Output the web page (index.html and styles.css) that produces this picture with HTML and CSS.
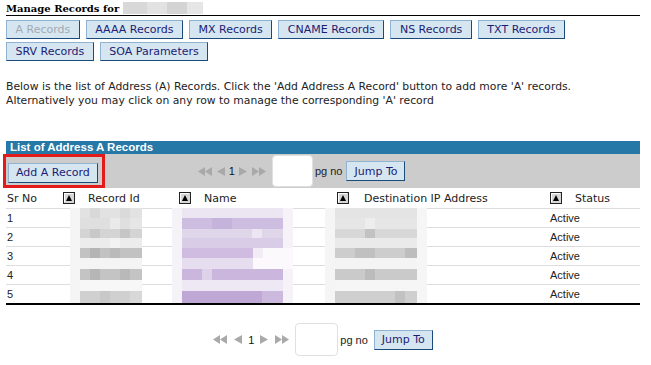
FILE: index.html
```html
<!DOCTYPE html>
<html lang="en">
<head>
  <meta charset="UTF-8" />
  <meta name="viewport" content="width=device-width, initial-scale=1.0" />
  <title>Manage Records</title>
  <link rel="stylesheet" href="styles.css">
</head>
<body>
<div class="page">
  <h2 class="page-title">Manage Records for <span class="masked-domain"></span></h2>

  <div class="tabs">
    <button class="btn" disabled>A Records</button>
    <button class="btn">AAAA Records</button>
    <button class="btn">MX Records</button>
    <button class="btn">CNAME Records</button>
    <button class="btn">NS Records</button>
    <button class="btn">TXT Records</button>
    <button class="btn">SRV Records</button>
    <button class="btn">SOA Parameters</button>
  </div>

  <p class="intro">Below is the list of Address (A) Records. Click the 'Add Address A Record' button to add more 'A' records.<br>
  Alternatively you may click on any row to manage the corresponding 'A' record</p>

  <div class="section-bar">List of Address A Records</div>
  <div class="toolbar">
    <span class="highlight"><button class="btn btn-add">Add A Record</button></span>
    <div class="pager pager-top">
      <div class="pager-nav">
        <svg width="14" height="9" viewBox="0 0 14 9"><polygon points="7,0 0,4.5 7,9" /><polygon points="14,0 7,4.5 14,9" /></svg>
        <svg width="9" height="9" viewBox="0 0 9 9"><polygon points="9,0 1,4.5 9,9" /></svg>
        <span class="page-num">1</span>
        <svg width="9" height="9" viewBox="0 0 9 9"><polygon points="0,0 8,4.5 0,9" /></svg>
        <svg width="14" height="9" viewBox="0 0 14 9"><polygon points="0,0 7,4.5 0,9" /><polygon points="7,0 14,4.5 7,9" /></svg>
      </div>
      <input class="page-input" type="text" />
      <span class="pg-label">pg no</span>
      <button class="btn btn-jump">Jump To</button>
    </div>
  </div>

  <div class="records">
    <table>
      <colgroup>
        <col class="col-sr" />
        <col class="col-id" />
        <col class="col-name" />
        <col class="col-ip" />
        <col class="col-status" />
      </colgroup>
      <thead>
        <tr>
          <th>Sr No</th>
          <th><span class="sort"><svg width="12" height="12" viewBox="0 0 12 12"><rect x="0.5" y="0.5" width="11" height="11" fill="#d6d6d6" stroke="#222" /><polyline points="1.5,10 1.5,1.5 10,1.5" fill="none" stroke="#fff" /><polygon points="3,9 9,9 6,3" fill="#000" /></svg></span>Record Id</th>
          <th><span class="sort"><svg width="12" height="12" viewBox="0 0 12 12"><rect x="0.5" y="0.5" width="11" height="11" fill="#d6d6d6" stroke="#222" /><polyline points="1.5,10 1.5,1.5 10,1.5" fill="none" stroke="#fff" /><polygon points="3,9 9,9 6,3" fill="#000" /></svg></span>Name</th>
          <th><span class="sort sort-wide"><svg width="12" height="12" viewBox="0 0 12 12"><rect x="0.5" y="0.5" width="11" height="11" fill="#d6d6d6" stroke="#222" /><polyline points="1.5,10 1.5,1.5 10,1.5" fill="none" stroke="#fff" /><polygon points="3,9 9,9 6,3" fill="#000" /></svg></span>Destination IP Address</th>
          <th><span class="sort"><svg width="12" height="12" viewBox="0 0 12 12"><rect x="0.5" y="0.5" width="11" height="11" fill="#d6d6d6" stroke="#222" /><polyline points="1.5,10 1.5,1.5 10,1.5" fill="none" stroke="#fff" /><polygon points="3,9 9,9 6,3" fill="#000" /></svg></span>Status</th>
        </tr>
      </thead>
      <tbody>
        <tr><td class="sr">1</td><td></td><td></td><td></td><td>Active</td></tr>
        <tr><td class="sr">2</td><td></td><td></td><td></td><td>Active</td></tr>
        <tr><td class="sr">3</td><td></td><td></td><td></td><td>Active</td></tr>
        <tr><td class="sr">4</td><td></td><td></td><td></td><td>Active</td></tr>
        <tr><td class="sr">5</td><td></td><td></td><td></td><td>Active</td></tr>
      </tbody>
    </table>

    <!-- pixelated redaction over the id, name and ip columns -->
    <svg class="mosaic" width="357" height="95" viewBox="0 0 357 95" shape-rendering="crispEdges">
      <g>
        <rect x="0" y="0" width="10" height="95" fill="#f5f5f5" />
        <rect x="10" y="0" width="62" height="10" fill="#e2e2e2" />
        <rect x="20" y="0" width="10" height="10" fill="#d8d8d8" />
        <rect x="50" y="0" width="10" height="10" fill="#dadada" />
        <rect x="10" y="10" width="62" height="11" fill="#dfdfdf" />
        <rect x="40" y="10" width="10" height="11" fill="#eaeaea" />
        <rect x="60" y="10" width="12" height="11" fill="#e6e6e6" />
        <rect x="10" y="21" width="62" height="9" fill="#d4d4d4" />
        <rect x="20" y="21" width="10" height="9" fill="#c8c8c8" />
        <rect x="50" y="21" width="10" height="9" fill="#c6c6c6" />
        <rect x="10" y="30" width="62" height="10" fill="#ececec" />
        <rect x="40" y="30" width="10" height="10" fill="#f2f2f2" />
        <rect x="10" y="40" width="62" height="10" fill="#c2c2c2" />
        <rect x="20" y="40" width="10" height="10" fill="#b4b4b4" />
        <rect x="40" y="40" width="10" height="10" fill="#bababa" />
        <rect x="10" y="50" width="62" height="11" fill="#f4f4f4" />
        <rect x="10" y="61" width="62" height="11" fill="#c4c4c4" />
        <rect x="20" y="61" width="10" height="11" fill="#b6b6b6" />
        <rect x="50" y="61" width="10" height="11" fill="#b9b9b9" />
        <rect x="10" y="72" width="62" height="11" fill="#f7f7f7" />
        <rect x="10" y="83" width="62" height="12" fill="#d0d0d0" />
        <rect x="30" y="83" width="10" height="12" fill="#c8c8c8" />
        <rect x="60" y="83" width="12" height="12" fill="#d8d8d8" />
      </g>
      <g>
        <rect x="102" y="0" width="10" height="95" fill="#f6f3f8" />
        <rect x="213" y="0" width="10" height="95" fill="#f6f3f8" />
        <rect x="112" y="0" width="101" height="10" fill="#ece5f2" />
        <rect x="112" y="10" width="101" height="11" fill="#cdbde0" />
        <rect x="142" y="10" width="20" height="11" fill="#c6b3db" />
        <rect x="112" y="21" width="101" height="9" fill="#e0d6ea" />
        <rect x="182" y="21" width="10" height="9" fill="#ece6f2" />
        <rect x="112" y="30" width="101" height="10" fill="#d8cce6" />
        <rect x="112" y="40" width="71" height="10" fill="#d0bce0" />
        <rect x="183" y="40" width="40" height="10" fill="#fbf9fc" />
        <rect x="183" y="40" width="10" height="10" fill="#f1ecf5" />
        <rect x="112" y="50" width="71" height="11" fill="#e6ddef" />
        <rect x="183" y="50" width="40" height="11" fill="#fbf9fc" />
        <rect x="112" y="61" width="101" height="11" fill="#cbb7de" />
        <rect x="132" y="61" width="10" height="11" fill="#ddd2e8" />
        <rect x="112" y="72" width="101" height="11" fill="#eee8f4" />
        <rect x="112" y="83" width="101" height="12" fill="#c0a8d6" />
        <rect x="192" y="83" width="21" height="12" fill="#cbb9de" />
      </g>
      <g>
        <rect x="255" y="0" width="10" height="95" fill="#f5f5f5" />
        <rect x="347" y="0" width="10" height="95" fill="#f6f6f6" />
        <rect x="265" y="0" width="82" height="10" fill="#e4e4e4" />
        <rect x="265" y="10" width="82" height="11" fill="#e6e6e6" />
        <rect x="295" y="10" width="10" height="11" fill="#ededed" />
        <rect x="265" y="21" width="82" height="9" fill="#d8d8d8" />
        <rect x="295" y="21" width="10" height="9" fill="#c2c2c2" />
        <rect x="265" y="30" width="82" height="10" fill="#eaeaea" />
        <rect x="265" y="40" width="82" height="10" fill="#cdcdcd" />
        <rect x="285" y="40" width="20" height="10" fill="#c0c0c0" />
        <rect x="335" y="40" width="12" height="10" fill="#bdbdbd" />
        <rect x="265" y="50" width="82" height="11" fill="#f4f4f4" />
        <rect x="265" y="61" width="82" height="11" fill="#cacaca" />
        <rect x="295" y="61" width="10" height="11" fill="#bcbcbc" />
        <rect x="265" y="72" width="82" height="11" fill="#f6f6f6" />
        <rect x="265" y="83" width="82" height="12" fill="#cfcfcf" />
        <rect x="325" y="83" width="10" height="12" fill="#c2c2c2" />
      </g>
    </svg>
  </div>

  <div class="pager pager-bottom">
    <div class="pager-nav">
      <svg width="14" height="9" viewBox="0 0 14 9"><polygon points="7,0 0,4.5 7,9" /><polygon points="14,0 7,4.5 14,9" /></svg>
      <svg width="9" height="9" viewBox="0 0 9 9"><polygon points="9,0 1,4.5 9,9" /></svg>
      <span class="page-num">1</span>
      <svg width="9" height="9" viewBox="0 0 9 9"><polygon points="0,0 8,4.5 0,9" /></svg>
      <svg width="14" height="9" viewBox="0 0 14 9"><polygon points="0,0 7,4.5 0,9" /><polygon points="7,0 14,4.5 7,9" /></svg>
    </div>
    <input class="page-input" type="text" />
    <span class="pg-label">pg no</span>
    <button class="btn btn-jump">Jump To</button>
  </div>
</div>
</body>
</html>
```

FILE: styles.css
```css
body {
  margin: 0;
  background-color: #fff;
  color: #222;
  font-family: "Liberation Sans", Arial, sans-serif;
  font-size: 11px;
}

.page {
  width: 634px;
  padding: 2px 6px 0;
}

.page-title {
  margin: 0;
  font-family: "DejaVu Serif", Georgia, serif;
  font-size: 10px;
  font-weight: bold;
  line-height: 13px;
  color: #000;
  border-bottom: 1px solid #000;
}

.masked-domain {
  display: inline-block;
  width: 80px;
  height: 12px;
  vertical-align: -2px;
  background: linear-gradient(90deg, #d8d8d8 0, #d8d8d8 30%, #e2e2e2 30%, #e2e2e2 55%, #d4d4d4 55%, #d4d4d4 80%, #e6e6e6 80%);
}

.tabs {
  display: flex;
  flex-wrap: wrap;
  gap: 3px 6px;
  margin-top: 4px;
}

.btn {
  box-sizing: border-box;
  height: 19px;
  padding: 0 8.5px;
  font-family: "DejaVu Sans", Verdana, sans-serif;
  font-size: 11px;
  line-height: 15px;
  color: #1c1c74;
  background-color: #d6e6f1;
  border: 1px solid;
  border-color: #8fb3d1 #1b4b7a #1b4b7a #8fb3d1;
  border-radius: 0;
}

.btn:disabled {
  color: #a2a9b1;
}

.intro {
  margin: 19px 0 0;
  font-family: "DejaVu Sans", Verdana, sans-serif;
  font-size: 10.8px;
  line-height: 14px;
  color: #222;
}

.section-bar {
  margin-top: 33px;
  padding-left: 4px;
  height: 13px;
  line-height: 13px;
  font-size: 11.5px;
  font-weight: bold;
  color: #fff;
  background-color: #2678a6;
}

.toolbar {
  display: flex;
  align-items: center;
  height: 34px;
  background-color: #cccccc;
}

.highlight {
  position: relative;
  display: inline-block;
  margin-left: 2px;
  margin-top: 3px;
}

.highlight::after {
  content: "";
  position: absolute;
  left: -5px;
  right: -7px;
  top: -9px;
  bottom: -5px;
  border: 3px solid #e41b1b;
}

.btn-add {
  display: block;
  height: 20px;
  padding: 0 7px;
}

.pager {
  display: flex;
  align-items: center;
}

.pager-top {
  margin-left: 100px;
}

.pager-nav {
  display: flex;
  align-items: center;
  gap: 4px;
  fill: #a9a9a9;
}

.page-num {
  color: #111;
}

.page-input {
  box-sizing: border-box;
  width: 41px;
  height: 32px;
  margin-left: 6px;
  border: 1px solid #e0e0e0;
  border-radius: 4px;
  background-color: #fff;
}

.pg-label {
  margin-left: 2px;
  color: #222;
}

.btn-jump {
  height: 20px;
  padding: 0 7px;
  margin-left: 4px;
}

.pager-bottom {
  justify-content: center;
  margin-top: 18px;
}

.pager-bottom .pager-nav {
  gap: 6px;
}

.pager-bottom .page-input {
  width: 43px;
  height: 33px;
}

.pager-bottom .btn-jump {
  margin-left: 6px;
}

.records {
  position: relative;
}

.records table {
  width: 634px;
  border-collapse: collapse;
  table-layout: fixed;
  border-bottom: 2px solid #000;
}

.col-sr { width: 57px; }
.col-id { width: 116px; }
.col-name { width: 158px; }
.col-ip { width: 213px; }
.col-status { width: 90px; }

.records th {
  height: 20px;
  padding: 0;
  text-align: left;
  font-family: "DejaVu Sans", Verdana, sans-serif;
  font-size: 11px;
  font-weight: normal;
  color: #222;
  white-space: nowrap;
}

.records th:first-child {
  padding-left: 1px;
}

.sort {
  display: inline-block;
  margin-right: 13px;
  vertical-align: -2px;
}

.sort svg {
  display: block;
}

.sort-wide {
  margin-right: 15px;
}

.records td {
  height: 18px;
  padding: 0;
  border-top: 1px solid #dddddd;
  color: #222;
}

.records td.sr {
  padding-left: 1px;
}

.mosaic {
  position: absolute;
  left: 64px;
  top: 20px;
}
```
